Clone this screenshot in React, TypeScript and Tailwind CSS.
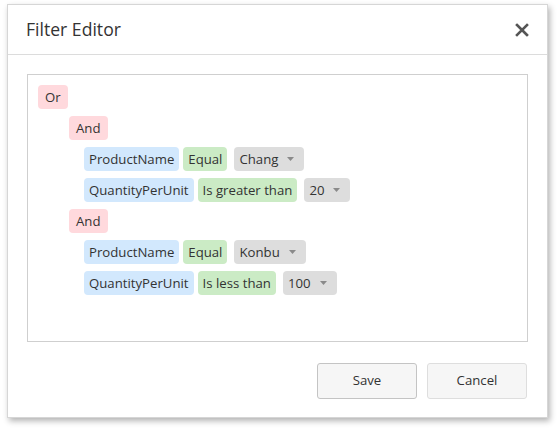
import React from "react";

const font = { fontFamily: '"Open Sans", "Noto Sans", Arial, sans-serif' };

function Group({ label }: { label: string }) {
  return (
    <div className="flex h-[31px]">
      <span className="h-[24px] px-[7px] rounded-[4px] bg-[#ffd9dd] text-[#333] text-[13.2px] leading-[24px]">
        {label}
      </span>
    </div>
  );
}

function Cond({ field, op, value }: { field: string; op: string; value: string }) {
  return (
    <div className="flex h-[31px] items-start">
      <span className="h-[24px] px-[5px] rounded-[4px] bg-[#d2e8fd] text-[#333] text-[13.2px] leading-[24px]">
        {field}
      </span>
      <span className="ml-[4px] h-[24px] px-[5px] rounded-[4px] bg-[#cbebc5] text-[#333] text-[13.2px] leading-[24px]">
        {op}
      </span>
      <span className="ml-[7px] h-[24px] pl-[5px] pr-[10px] rounded-[4px] bg-[#dddddd] text-[#333] text-[13.2px] leading-[24px] flex items-center">
        {value}
        <svg width="7" height="4" viewBox="0 0 7 4" className="ml-[9px]">
          <path d="M0 0 L7 0 L3.5 4 Z" fill="#8a8a8a" />
        </svg>
      </span>
    </div>
  );
}

export default function App() {
  return (
    <div className="w-[558px] h-[430px] bg-white relative" style={font}>
      <div className="absolute left-[7px] top-[4px] w-[541px] h-[414px] bg-white border border-[#d6d6d6] shadow-[2px_3px_6px_rgba(0,0,0,0.3)] flex flex-col">
        <div className="h-[50px] border-b border-[#dcdcdc] flex items-center justify-between pl-[18px] pr-[18px]">
          <span className="text-[17.6px] text-[#333]">Filter Editor</span>
          <svg width="14" height="14" viewBox="0 0 14 14" className="mt-[1px]">
            <path d="M2 2 L12 12 M12 2 L2 12" stroke="#555" strokeWidth="2.6" strokeLinecap="square" />
          </svg>
        </div>
        <div className="px-[19px] pt-[19px]">
          <div className="h-[268px] border border-[#cfcfcf] p-[10px]">
            <Group label="Or" />
            <div className="pl-[31px]">
              <Group label="And" />
              <div className="pl-[15px]">
                <Cond field="ProductName" op="Equal" value="Chang" />
                <Cond field="QuantityPerUnit" op="Is greater than" value="20" />
              </div>
              <Group label="And" />
              <div className="pl-[15px]">
                <Cond field="ProductName" op="Equal" value="Konbu" />
                <Cond field="QuantityPerUnit" op="Is less than" value="100" />
              </div>
            </div>
          </div>
        </div>
        <div className="flex justify-end gap-[10px] px-[20px] pt-[21px]">
          <button className="w-[100px] h-[36px] rounded-[3px] border border-[#c4c4c4] bg-[#f6f6f6] text-[13.2px] text-[#333]">
            Save
          </button>
          <button className="w-[100px] h-[36px] rounded-[3px] border border-[#dedede] bg-[#f6f6f6] text-[13.2px] text-[#333]">
            Cancel
          </button>
        </div>
      </div>
    </div>
  );
}
